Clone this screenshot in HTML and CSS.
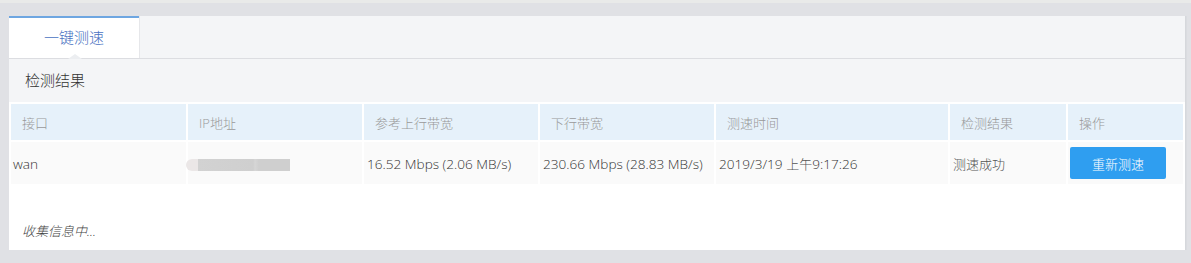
FILE: index.html
```html
<!DOCTYPE html>
<html lang="zh-CN">
<head>
<meta charset="utf-8">
<title>一键测速</title>
<link rel="stylesheet" href="styles.css">
</head>
<body>
<div class="topstrip"></div>
<div class="page">
  <div class="card">
    <div class="tabs">
      <div class="tab">一键测速<span class="caret"></span></div>
    </div>
    <div class="section-title">检测结果</div>
    <table class="grid">
      <colgroup>
        <col class="w175"><col class="w174"><col class="w174"><col class="w174"><col class="w232"><col class="w116"><col class="w115">
      </colgroup>
      <thead>
        <tr>
          <th>接口</th><th>IP地址</th><th>参考上行带宽</th><th>下行带宽</th><th>测速时间</th><th>检测结果</th><th>操作</th>
        </tr>
      </thead>
      <tbody>
        <tr>
          <td class="first">wan</td>
          <td><span class="blur"><span class="blur-edge"></span><span class="blur-body"></span></span></td>
          <td>16.52 Mbps (2.06 MB/s)</td>
          <td>230.66 Mbps (28.83 MB/s)</td>
          <td>2019/3/19 <span class="cjk">上午</span>9:17:26</td>
          <td><span class="cjk">测速成功</span></td>
          <td class="op"><button class="btn">重新测速</button></td>
        </tr>
      </tbody>
    </table>
    <div class="status">收集信息中...</div>
  </div>
</div>
</body>
</html>
```

FILE: styles.css
```css
* { box-sizing: border-box; }
html, body { margin: 0; padding: 0; }
body {
  background: #e0e1e5;
  font-family: "Open Sans", "Noto Sans CJK SC", sans-serif;
  font-size: 13px;
  font-weight: 300;
  color: #333;
  width: 1191px;
  height: 263px;
  overflow: hidden;
}
.topstrip { height: 3px; background: #e9eae9; }
.page { padding: 13px 0 0 9px; }
.card {
  width: 1176px;
  background: #fff;
  box-shadow: 1px 0 0 #d6d8dc, 2px 0 0 #dadce0;
}
.tabs {
  height: 43px;
  background: #f4f5f7;
  border-bottom: 1px solid #dcdde1;
  display: flex;
}
.tab {
  position: relative;
  width: 130px;
  height: 42px;
  background: #fff;
  border-top: 2px solid #6ea6e1;
  color: #4a72c2;
  font-size: 15px;
  line-height: 38px;
  text-align: center;
  box-shadow: 1px 0 0 #e6e7ea;
}
.caret {
  position: absolute;
  left: 59px;
  bottom: -1px;
  width: 0; height: 0;
  border-left: 7px solid transparent;
  border-right: 7px solid transparent;
  border-bottom: 5px solid #eceef1;
}
.section-title {
  height: 43px;
  background: #f4f5f7;
  padding-left: 16px;
  font-size: 15px;
  line-height: 43px;
  color: #333;
}
.grid {
  width: 1176px;
  table-layout: fixed;
  border-collapse: separate;
  border-spacing: 2px;
  background: #fff;
}
.w175 { width: 175px; }
.w174 { width: 174px; }
.w232 { width: 232px; }
.w116 { width: 116px; }
.w115 { width: 115px; }
.grid th {
  height: 36px;
  background: #e6f1fa;
  color: #999;
  font-weight: 300;
  text-align: left;
  padding: 0 0 0 11px;
  font-size: 13px;
}
.grid td {
  height: 42px;
  background: #fafafa;
  padding: 0 0 0 3px;
  color: #333;
  font-size: 13.6px;
  white-space: nowrap;
  overflow: visible;
}
.grid td .cjk { font-size: 13px; color: #555; }
.grid td.first { padding-left: 2px; }
.grid td.op { padding-left: 2px; }
.blur { display: inline-flex; margin-left: -5px; vertical-align: middle; height: 12px; }
.blur-edge { width: 12px; height: 12px; background: #ebe7e7; border-radius: 6px 0 0 6px; }
.blur-body { width: 92px; height: 12px; background: linear-gradient(90deg, #d2d2d2, #cfcfcf 60%, #d6d6d6 62%, #cfcfcf 66%); }
.btn {
  width: 96px;
  height: 32px;
  border: none;
  border-radius: 2px;
  background: #2f9ef0;
  color: #fff;
  font-family: inherit;
  font-weight: 300;
  font-size: 13px;
  padding: 0;
}
.status {
  padding: 35px 0 9px 13px;
  line-height: 20px;
  font-style: italic;
  color: #444;
  font-size: 13px;
}
```
